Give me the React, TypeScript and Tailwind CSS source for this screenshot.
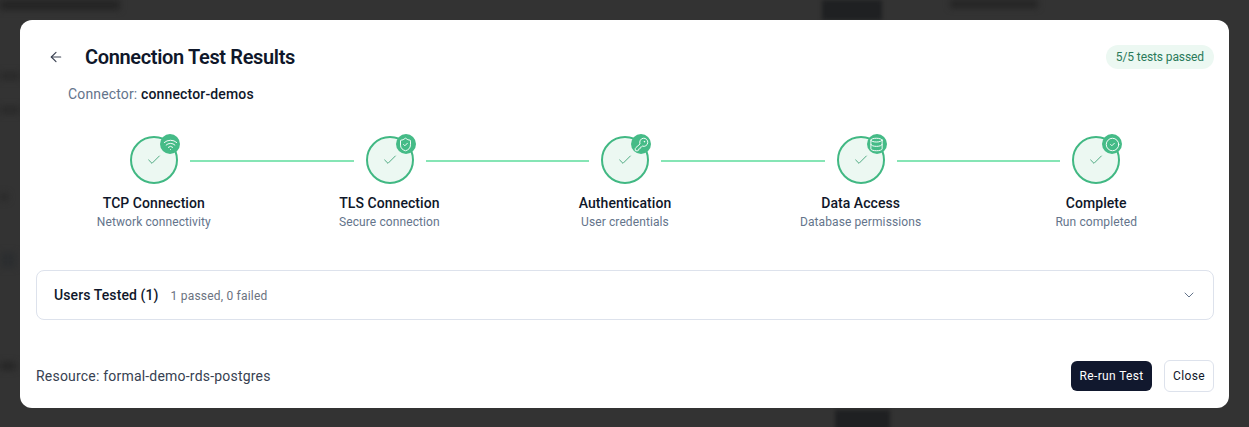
import { ArrowLeft, Check, ChevronDown, CircleCheck, Database, KeyRound, ShieldCheck, Wifi } from "lucide-react";

const STEPS = [
  { title: "TCP Connection", sub: "Network connectivity", icon: Wifi },
  { title: "TLS Connection", sub: "Secure connection", icon: ShieldCheck },
  { title: "Authentication", sub: "User credentials", icon: KeyRound },
  { title: "Data Access", sub: "Database permissions", icon: Database },
  { title: "Complete", sub: "Run completed", icon: CircleCheck },
];

function StepCircle({ icon: Icon }: { icon: typeof Wifi }) {
  return (
    <div className="relative flex h-12 w-12 shrink-0 items-center justify-center rounded-full border-2 border-[#41b883] bg-[#ecf8f2]">
      <Check className="h-4 w-4 text-[#2f9a6b]" strokeWidth={1.25} />
      <div className="absolute -right-1 -top-1 flex h-5 w-5 items-center justify-center rounded-full bg-[#45bb87]">
        <Icon className="h-[15px] w-[15px] text-white" strokeWidth={1.5} />
      </div>
    </div>
  );
}

export default function App() {
  return (
    <div className="relative flex h-[427px] w-[1249px] overflow-hidden bg-[#333333] p-5 font-['Roboto',sans-serif]">
      {/* blurred page behind the dialog */}
      <div className="absolute left-0 top-0 h-2.5 w-[120px] bg-[#242424] blur-[3px]" />
      <div className="absolute left-[822px] top-0 h-5 w-[60px] bg-[#1f2022] blur-[2px]" />
      <div className="absolute left-[950px] top-0 h-2 w-[88px] bg-[#242424] blur-[3px]" />
      <div className="absolute left-[835px] top-[410px] h-5 w-[55px] bg-[#1f2022] blur-[2px]" />
      <div className="absolute left-0 top-[72px] h-2 w-5 bg-[#2a2a2a] blur-[3px]" />
      <div className="absolute left-0 top-[106px] h-2 w-5 bg-[#2a2a2a] blur-[3px]" />
      <div className="absolute left-0 top-[193px] h-2 w-2 bg-[#2a2a2a] blur-[3px]" />
      <div className="absolute left-0 top-[252px] h-4 w-4 bg-[#2c2e30] blur-[3px]" />
      <div className="absolute left-0 top-[362px] h-2 w-4 bg-[#262626] blur-[3px]" />

      <div className="relative flex h-[388px] w-[1209px] flex-col rounded-xl bg-white pl-4 pr-[15px] pt-6">
        <div className="flex h-[26px] items-center justify-between">
          <div className="flex items-center">
            <ArrowLeft className="ml-3 h-4 w-4 text-[#3b4252]" strokeWidth={1.75} />
            <h2 className="ml-[21px] text-[20px] font-semibold tracking-[-0.35px] text-[#0f172a]">Connection Test Results</h2>
          </div>
          <span className="rounded-full bg-[#ecf8f2] px-2.5 py-1 text-xs leading-[16px] tracking-[-0.1px] text-[#2a7a5a]">5/5 tests passed</span>
        </div>

        <p className="mt-[14px] pl-8 text-sm leading-5 tracking-[0.15px] text-[#64748b]">
          Connector: <span className="font-medium text-[#0f172a]">connector-demos</span>
        </p>

        <div className="mt-[32px] flex items-center gap-3 px-[94px]">
          {STEPS.map((step, i) => (
            <div key={step.title} className={i < 4 ? "flex flex-1 items-center gap-3" : "flex items-center"}>
              <StepCircle icon={step.icon} />
              {i < 4 && <div className="mt-0.5 h-0.5 flex-1 bg-[#86e5b5]" />}
            </div>
          ))}
        </div>

        <div className="mt-[9px] grid grid-cols-5">
          {STEPS.map((step) => (
            <div key={step.title} className="flex flex-col items-center">
              <span className="text-sm font-medium leading-5 tracking-[0.05px] text-[#0f172a]">{step.title}</span>
              <span className="mt-px text-xs leading-4 tracking-[0.1px] text-[#64748b]">{step.sub}</span>
            </div>
          ))}
        </div>

        <div className="mt-10 flex h-[50px] items-center justify-between rounded-lg border border-[#dde2ec] pl-[17px] pr-4">
          <div className="flex items-baseline gap-3">
            <span className="text-sm font-medium tracking-[0.1px] text-[#0f172a]">Users Tested (1)</span>
            <span className="text-xs tracking-[0.2px] text-[#6b7280]">1 passed, 0 failed</span>
          </div>
          <ChevronDown className="h-4 w-4 text-[#64748b]" strokeWidth={1.5} />
        </div>

        <div className="mt-10 flex items-center justify-between">
          <span className="text-sm tracking-[0.2px] text-[#374151]">Resource: formal-demo-rds-postgres</span>
          <div className="flex items-center gap-3">
            <button className="h-[30px] rounded-md bg-[#11182e] px-[8.5px] text-xs tracking-[0.35px] text-white">Re-run Test</button>
            <button className="h-8 rounded-md border border-[#dde2ec] bg-white px-2 text-xs tracking-[0.35px] text-[#0f172a]">Close</button>
          </div>
        </div>
      </div>
    </div>
  );
}
